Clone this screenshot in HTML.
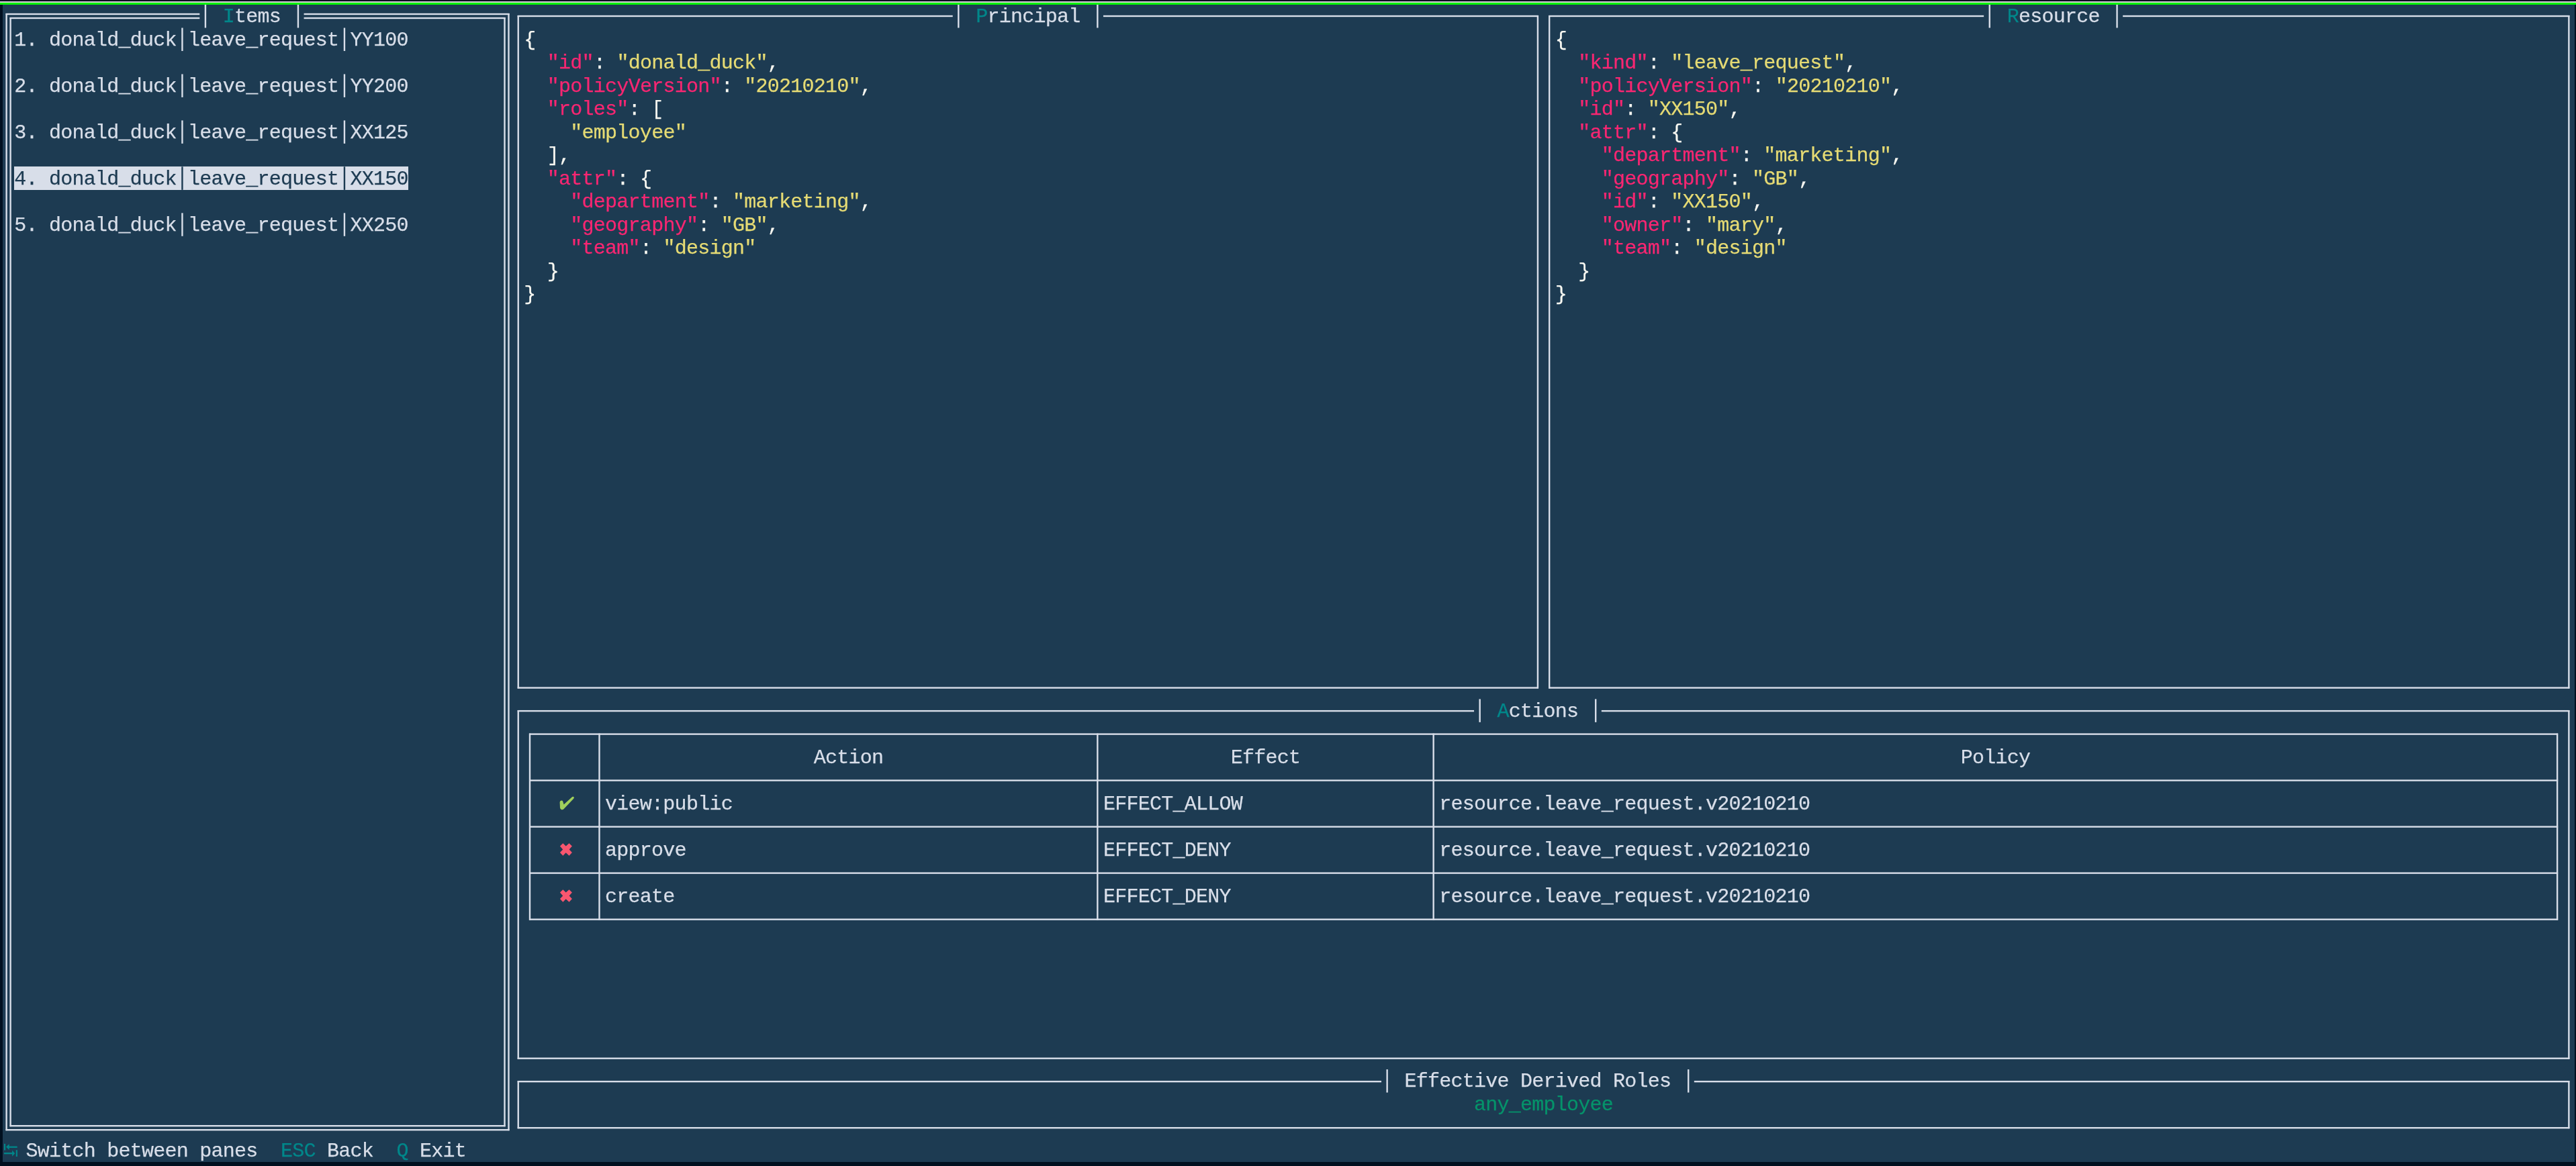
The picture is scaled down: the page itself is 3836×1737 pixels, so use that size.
<!DOCTYPE html>
<html><head><meta charset="utf-8"><style>
html,body{margin:0;padding:0;width:3836px;height:1737px;overflow:hidden;background:#011020;}
#term{position:absolute;left:4px;top:7px;width:3830px;height:1724px;background:#1d3b52;}
#deco1{position:absolute;left:0;top:2px;width:3836px;height:2px;background:#d6cad6;}
#deco2{position:absolute;left:0;top:4px;width:3836px;height:3px;background:#06f206;}
#root div, #root svg{position:absolute;}
#txt{position:absolute;left:0;top:0;width:3836px;height:1737px;will-change:transform;}
.t{font-family:"Liberation Mono",monospace;font-size:30px;line-height:34.480px;height:34.480px;white-space:pre;letter-spacing:-0.7507px;-webkit-text-stroke:0.25px currentColor;}
</style></head>
<body><div id="term"></div><div id="deco1"></div><div id="deco2"></div>
<div id="root">
<div style="left:21.25px;top:248.36px;width:586.58px;height:34.48px;background:#d8dee9"></div>
<svg style="left:0;top:0" width="3836" height="1737" viewBox="0 0 3836 1737"><rect x="14.43" y="26.00" width="2.40" height="1652.19" fill="#d8dee9"/><rect x="750.27" y="26.00" width="2.40" height="1652.19" fill="#d8dee9"/><rect x="14.63" y="1675.99" width="737.85" height="2.40" fill="#d8dee9"/><rect x="14.63" y="25.80" width="282.66" height="2.40" fill="#d8dee9"/><rect x="452.56" y="25.80" width="299.91" height="2.40" fill="#d8dee9"/><rect x="8.43" y="20.00" width="2.40" height="1664.19" fill="#d8dee9"/><rect x="756.27" y="20.00" width="2.40" height="1664.19" fill="#d8dee9"/><rect x="8.63" y="1681.99" width="749.85" height="2.40" fill="#d8dee9"/><rect x="8.63" y="19.80" width="288.66" height="2.40" fill="#d8dee9"/><rect x="452.56" y="19.80" width="305.91" height="2.40" fill="#d8dee9"/><rect x="304.71" y="7.00" width="2.40" height="34.48" fill="#d8dee9"/><rect x="442.73" y="7.00" width="2.40" height="34.48" fill="#d8dee9"/><rect x="770.53" y="23.00" width="2.40" height="1002.62" fill="#d8dee9"/><rect x="2288.72" y="23.00" width="2.40" height="1002.62" fill="#d8dee9"/><rect x="770.73" y="1023.42" width="1520.20" height="2.40" fill="#d8dee9"/><rect x="770.73" y="22.80" width="647.96" height="2.40" fill="#d8dee9"/><rect x="1642.96" y="22.80" width="647.96" height="2.40" fill="#d8dee9"/><rect x="1426.11" y="7.00" width="2.40" height="34.48" fill="#d8dee9"/><rect x="1633.14" y="7.00" width="2.40" height="34.48" fill="#d8dee9"/><rect x="2305.98" y="23.00" width="2.40" height="1002.62" fill="#d8dee9"/><rect x="3824.17" y="23.00" width="2.40" height="1002.62" fill="#d8dee9"/><rect x="2306.18" y="1023.42" width="1520.20" height="2.40" fill="#d8dee9"/><rect x="2306.18" y="22.80" width="647.96" height="2.40" fill="#d8dee9"/><rect x="3161.16" y="22.80" width="665.21" height="2.40" fill="#d8dee9"/><rect x="2961.56" y="7.00" width="2.40" height="34.48" fill="#d8dee9"/><rect x="3151.34" y="7.00" width="2.40" height="34.48" fill="#d8dee9"/><rect x="770.53" y="1058.12" width="2.40" height="519.56" fill="#d8dee9"/><rect x="3824.17" y="1058.12" width="2.40" height="519.56" fill="#d8dee9"/><rect x="770.73" y="1575.48" width="3055.65" height="2.40" fill="#d8dee9"/><rect x="770.73" y="1057.92" width="1424.31" height="2.40" fill="#d8dee9"/><rect x="2384.81" y="1057.92" width="1441.56" height="2.40" fill="#d8dee9"/><rect x="2202.46" y="1041.40" width="2.40" height="34.48" fill="#d8dee9"/><rect x="2374.98" y="1041.40" width="2.40" height="34.48" fill="#d8dee9"/><rect x="770.53" y="1610.18" width="2.40" height="71.01" fill="#d8dee9"/><rect x="3824.17" y="1610.18" width="2.40" height="71.01" fill="#d8dee9"/><rect x="770.73" y="1678.99" width="3055.65" height="2.40" fill="#d8dee9"/><rect x="770.73" y="1609.98" width="1286.29" height="2.40" fill="#d8dee9"/><rect x="2522.83" y="1609.98" width="1303.55" height="2.40" fill="#d8dee9"/><rect x="2064.44" y="1593.08" width="2.40" height="34.48" fill="#d8dee9"/><rect x="2513.00" y="1593.08" width="2.40" height="34.48" fill="#d8dee9"/><rect x="270.21" y="41.48" width="2.40" height="34.48" fill="#d8dee9"/><rect x="511.74" y="41.48" width="2.40" height="34.48" fill="#d8dee9"/><rect x="270.21" y="110.44" width="2.40" height="34.48" fill="#d8dee9"/><rect x="511.74" y="110.44" width="2.40" height="34.48" fill="#d8dee9"/><rect x="270.21" y="179.40" width="2.40" height="34.48" fill="#d8dee9"/><rect x="511.74" y="179.40" width="2.40" height="34.48" fill="#d8dee9"/><rect x="270.21" y="248.36" width="2.40" height="34.48" fill="#1d3b52"/><rect x="511.74" y="248.36" width="2.40" height="34.48" fill="#1d3b52"/><rect x="270.21" y="317.32" width="2.40" height="34.48" fill="#d8dee9"/><rect x="511.74" y="317.32" width="2.40" height="34.48" fill="#d8dee9"/><rect x="787.98" y="1092.42" width="3021.14" height="2.40" fill="#d8dee9"/><rect x="787.98" y="1161.43" width="3021.14" height="2.40" fill="#d8dee9"/><rect x="787.98" y="1230.44" width="3021.14" height="2.40" fill="#d8dee9"/><rect x="787.98" y="1299.45" width="3021.14" height="2.40" fill="#d8dee9"/><rect x="787.98" y="1368.46" width="3021.14" height="2.40" fill="#d8dee9"/><rect x="787.78" y="1092.62" width="2.40" height="278.03" fill="#d8dee9"/><rect x="891.29" y="1092.62" width="2.40" height="278.03" fill="#d8dee9"/><rect x="1633.14" y="1092.62" width="2.40" height="278.03" fill="#d8dee9"/><rect x="2133.45" y="1092.62" width="2.40" height="278.03" fill="#d8dee9"/><rect x="3806.92" y="1092.62" width="2.40" height="278.03" fill="#d8dee9"/></svg>
<div id="txt"><div class="t" style="left:331.79px;top:8.30px"><span style="color:#00878a">I</span><span style="color:#d8dee9">tems</span></div>
<div class="t" style="left:1453.19px;top:8.30px"><span style="color:#00878a">P</span><span style="color:#d8dee9">rincipal</span></div>
<div class="t" style="left:2988.64px;top:8.30px"><span style="color:#00878a">R</span><span style="color:#d8dee9">esource</span></div>
<div class="t" style="left:2229.54px;top:1042.70px"><span style="color:#00878a">A</span><span style="color:#d8dee9">ctions</span></div>
<div class="t" style="left:2091.52px;top:1594.38px"><span style="color:#d8dee9">Effective Derived Roles</span></div>
<div class="t" style="left:21.25px;top:42.78px"><span style="color:#d8dee9">1. donald_duck leave_request YY100</span></div>
<div class="t" style="left:21.25px;top:111.74px"><span style="color:#d8dee9">2. donald_duck leave_request YY200</span></div>
<div class="t" style="left:21.25px;top:180.70px"><span style="color:#d8dee9">3. donald_duck leave_request XX125</span></div>
<div class="t" style="left:21.25px;top:249.66px"><span style="color:#1d3b52">4. donald_duck leave_request XX150</span></div>
<div class="t" style="left:21.25px;top:318.62px"><span style="color:#d8dee9">5. donald_duck leave_request XX250</span></div>
<div class="t" style="left:780.35px;top:42.78px"><span style="color:#f8f8f2">{</span></div>
<div class="t" style="left:780.35px;top:77.26px"><span style="color:#f8f8f2">  </span><span style="color:#f92672">&quot;id&quot;</span><span style="color:#f8f8f2">: </span><span style="color:#e6db74">&quot;donald_duck&quot;</span><span style="color:#f8f8f2">,</span></div>
<div class="t" style="left:780.35px;top:111.74px"><span style="color:#f8f8f2">  </span><span style="color:#f92672">&quot;policyVersion&quot;</span><span style="color:#f8f8f2">: </span><span style="color:#e6db74">&quot;20210210&quot;</span><span style="color:#f8f8f2">,</span></div>
<div class="t" style="left:780.35px;top:146.22px"><span style="color:#f8f8f2">  </span><span style="color:#f92672">&quot;roles&quot;</span><span style="color:#f8f8f2">: </span><span style="color:#f8f8f2">[</span><span style="color:#f8f8f2"></span></div>
<div class="t" style="left:780.35px;top:180.70px"><span style="color:#f8f8f2">    </span><span style="color:#e6db74">&quot;employee&quot;</span></div>
<div class="t" style="left:780.35px;top:215.18px"><span style="color:#f8f8f2">  ],</span></div>
<div class="t" style="left:780.35px;top:249.66px"><span style="color:#f8f8f2">  </span><span style="color:#f92672">&quot;attr&quot;</span><span style="color:#f8f8f2">: </span><span style="color:#f8f8f2">{</span><span style="color:#f8f8f2"></span></div>
<div class="t" style="left:780.35px;top:284.14px"><span style="color:#f8f8f2">    </span><span style="color:#f92672">&quot;department&quot;</span><span style="color:#f8f8f2">: </span><span style="color:#e6db74">&quot;marketing&quot;</span><span style="color:#f8f8f2">,</span></div>
<div class="t" style="left:780.35px;top:318.62px"><span style="color:#f8f8f2">    </span><span style="color:#f92672">&quot;geography&quot;</span><span style="color:#f8f8f2">: </span><span style="color:#e6db74">&quot;GB&quot;</span><span style="color:#f8f8f2">,</span></div>
<div class="t" style="left:780.35px;top:353.10px"><span style="color:#f8f8f2">    </span><span style="color:#f92672">&quot;team&quot;</span><span style="color:#f8f8f2">: </span><span style="color:#e6db74">&quot;design&quot;</span><span style="color:#f8f8f2"></span></div>
<div class="t" style="left:780.35px;top:387.58px"><span style="color:#f8f8f2">  }</span></div>
<div class="t" style="left:780.35px;top:422.06px"><span style="color:#f8f8f2">}</span></div>
<div class="t" style="left:2315.80px;top:42.78px"><span style="color:#f8f8f2">{</span></div>
<div class="t" style="left:2315.80px;top:77.26px"><span style="color:#f8f8f2">  </span><span style="color:#f92672">&quot;kind&quot;</span><span style="color:#f8f8f2">: </span><span style="color:#e6db74">&quot;leave_request&quot;</span><span style="color:#f8f8f2">,</span></div>
<div class="t" style="left:2315.80px;top:111.74px"><span style="color:#f8f8f2">  </span><span style="color:#f92672">&quot;policyVersion&quot;</span><span style="color:#f8f8f2">: </span><span style="color:#e6db74">&quot;20210210&quot;</span><span style="color:#f8f8f2">,</span></div>
<div class="t" style="left:2315.80px;top:146.22px"><span style="color:#f8f8f2">  </span><span style="color:#f92672">&quot;id&quot;</span><span style="color:#f8f8f2">: </span><span style="color:#e6db74">&quot;XX150&quot;</span><span style="color:#f8f8f2">,</span></div>
<div class="t" style="left:2315.80px;top:180.70px"><span style="color:#f8f8f2">  </span><span style="color:#f92672">&quot;attr&quot;</span><span style="color:#f8f8f2">: </span><span style="color:#f8f8f2">{</span><span style="color:#f8f8f2"></span></div>
<div class="t" style="left:2315.80px;top:215.18px"><span style="color:#f8f8f2">    </span><span style="color:#f92672">&quot;department&quot;</span><span style="color:#f8f8f2">: </span><span style="color:#e6db74">&quot;marketing&quot;</span><span style="color:#f8f8f2">,</span></div>
<div class="t" style="left:2315.80px;top:249.66px"><span style="color:#f8f8f2">    </span><span style="color:#f92672">&quot;geography&quot;</span><span style="color:#f8f8f2">: </span><span style="color:#e6db74">&quot;GB&quot;</span><span style="color:#f8f8f2">,</span></div>
<div class="t" style="left:2315.80px;top:284.14px"><span style="color:#f8f8f2">    </span><span style="color:#f92672">&quot;id&quot;</span><span style="color:#f8f8f2">: </span><span style="color:#e6db74">&quot;XX150&quot;</span><span style="color:#f8f8f2">,</span></div>
<div class="t" style="left:2315.80px;top:318.62px"><span style="color:#f8f8f2">    </span><span style="color:#f92672">&quot;owner&quot;</span><span style="color:#f8f8f2">: </span><span style="color:#e6db74">&quot;mary&quot;</span><span style="color:#f8f8f2">,</span></div>
<div class="t" style="left:2315.80px;top:353.10px"><span style="color:#f8f8f2">    </span><span style="color:#f92672">&quot;team&quot;</span><span style="color:#f8f8f2">: </span><span style="color:#e6db74">&quot;design&quot;</span><span style="color:#f8f8f2"></span></div>
<div class="t" style="left:2315.80px;top:387.58px"><span style="color:#f8f8f2">  }</span></div>
<div class="t" style="left:2315.80px;top:422.06px"><span style="color:#f8f8f2">}</span></div>
<div class="t" style="left:1211.66px;top:1111.66px"><span style="color:#d8dee9">Action</span></div>
<div class="t" style="left:1832.74px;top:1111.66px"><span style="color:#d8dee9">Effect</span></div>
<div class="t" style="left:2919.63px;top:1111.66px"><span style="color:#d8dee9">Policy</span></div>
<div class="t" style="left:901.12px;top:1180.62px"><span style="color:#d8dee9">view:public</span></div>
<div class="t" style="left:1642.96px;top:1180.62px"><span style="color:#d8dee9">EFFECT_ALLOW</span></div>
<div class="t" style="left:2143.28px;top:1180.62px"><span style="color:#d8dee9">resource.leave_request.v20210210</span></div>
<div class="t" style="left:901.12px;top:1249.58px"><span style="color:#d8dee9">approve</span></div>
<div class="t" style="left:1642.96px;top:1249.58px"><span style="color:#d8dee9">EFFECT_DENY</span></div>
<div class="t" style="left:2143.28px;top:1249.58px"><span style="color:#d8dee9">resource.leave_request.v20210210</span></div>
<div class="t" style="left:901.12px;top:1318.54px"><span style="color:#d8dee9">create</span></div>
<div class="t" style="left:1642.96px;top:1318.54px"><span style="color:#d8dee9">EFFECT_DENY</span></div>
<div class="t" style="left:2143.28px;top:1318.54px"><span style="color:#d8dee9">resource.leave_request.v20210210</span></div>
<div class="t" style="left:2195.04px;top:1628.86px"><span style="color:#05936a">any_employee</span></div>
<div class="t" style="left:38.50px;top:1697.82px"><span style="color:#d8dee9">Switch between panes</span></div>
<div class="t" style="left:418.05px;top:1697.82px"><span style="color:#00878a">ESC</span></div>
<div class="t" style="left:487.06px;top:1697.82px"><span style="color:#d8dee9">Back</span></div>
<div class="t" style="left:590.58px;top:1697.82px"><span style="color:#00878a">Q</span></div>
<div class="t" style="left:625.08px;top:1697.82px"><span style="color:#d8dee9">Exit</span></div></div>
<svg style="left:828px;top:1182px;" width="32" height="28" viewBox="0 0 32 28"><g transform="translate(0,0.00)"><path d="M5.6 13.6 Q5.8 10.8 8.4 10.6 Q10.2 10.7 10.4 12.6 L11.6 16.6 L24.2 5.0 Q25.8 4.2 26.7 5.6 Q27.1 6.8 26.2 7.8 L11.2 23.5 Q9.6 24.7 7.9 24.0 Q6.3 23.2 6.0 21.4 Z" fill="#a0d05c"/></g></svg>
<svg style="left:828px;top:1250.00px" width="32" height="30" viewBox="0 0 32 30"><path d="M5.9 10.5 L10.3 6.2 L14.7 10.5 L19.5 6.2 L23.9 10.5 L19.6 15.4 L23.9 20.1 L19.5 24.7 L14.7 20.3 L10.3 24.7 L5.9 20.1 L10.2 15.4 Z" fill="#f8566f"/></svg>
<svg style="left:828px;top:1318.96px" width="32" height="30" viewBox="0 0 32 30"><path d="M5.9 10.5 L10.3 6.2 L14.7 10.5 L19.5 6.2 L23.9 10.5 L19.6 15.4 L23.9 20.1 L19.5 24.7 L14.7 20.3 L10.3 24.7 L5.9 20.1 L10.2 15.4 Z" fill="#f8566f"/></svg>
<svg style="left:0px;top:1696px" width="32" height="34" viewBox="0 0 32 34"><g fill="#00878a"><rect x="6" y="7.9" width="2.1" height="9.6"/><path d="M9.0 12.5 L13.7 8.2 L13.7 17.0 Z"/><rect x="13.2" y="11.6" width="12.5" height="2.3"/><rect x="6" y="21.0" width="12.4" height="2.3"/><path d="M22.2 22.2 L18.1 17.6 L18.1 26.8 Z"/><rect x="23.8" y="17.2" width="2.1" height="9.8"/></g></svg>
</div></body></html>
